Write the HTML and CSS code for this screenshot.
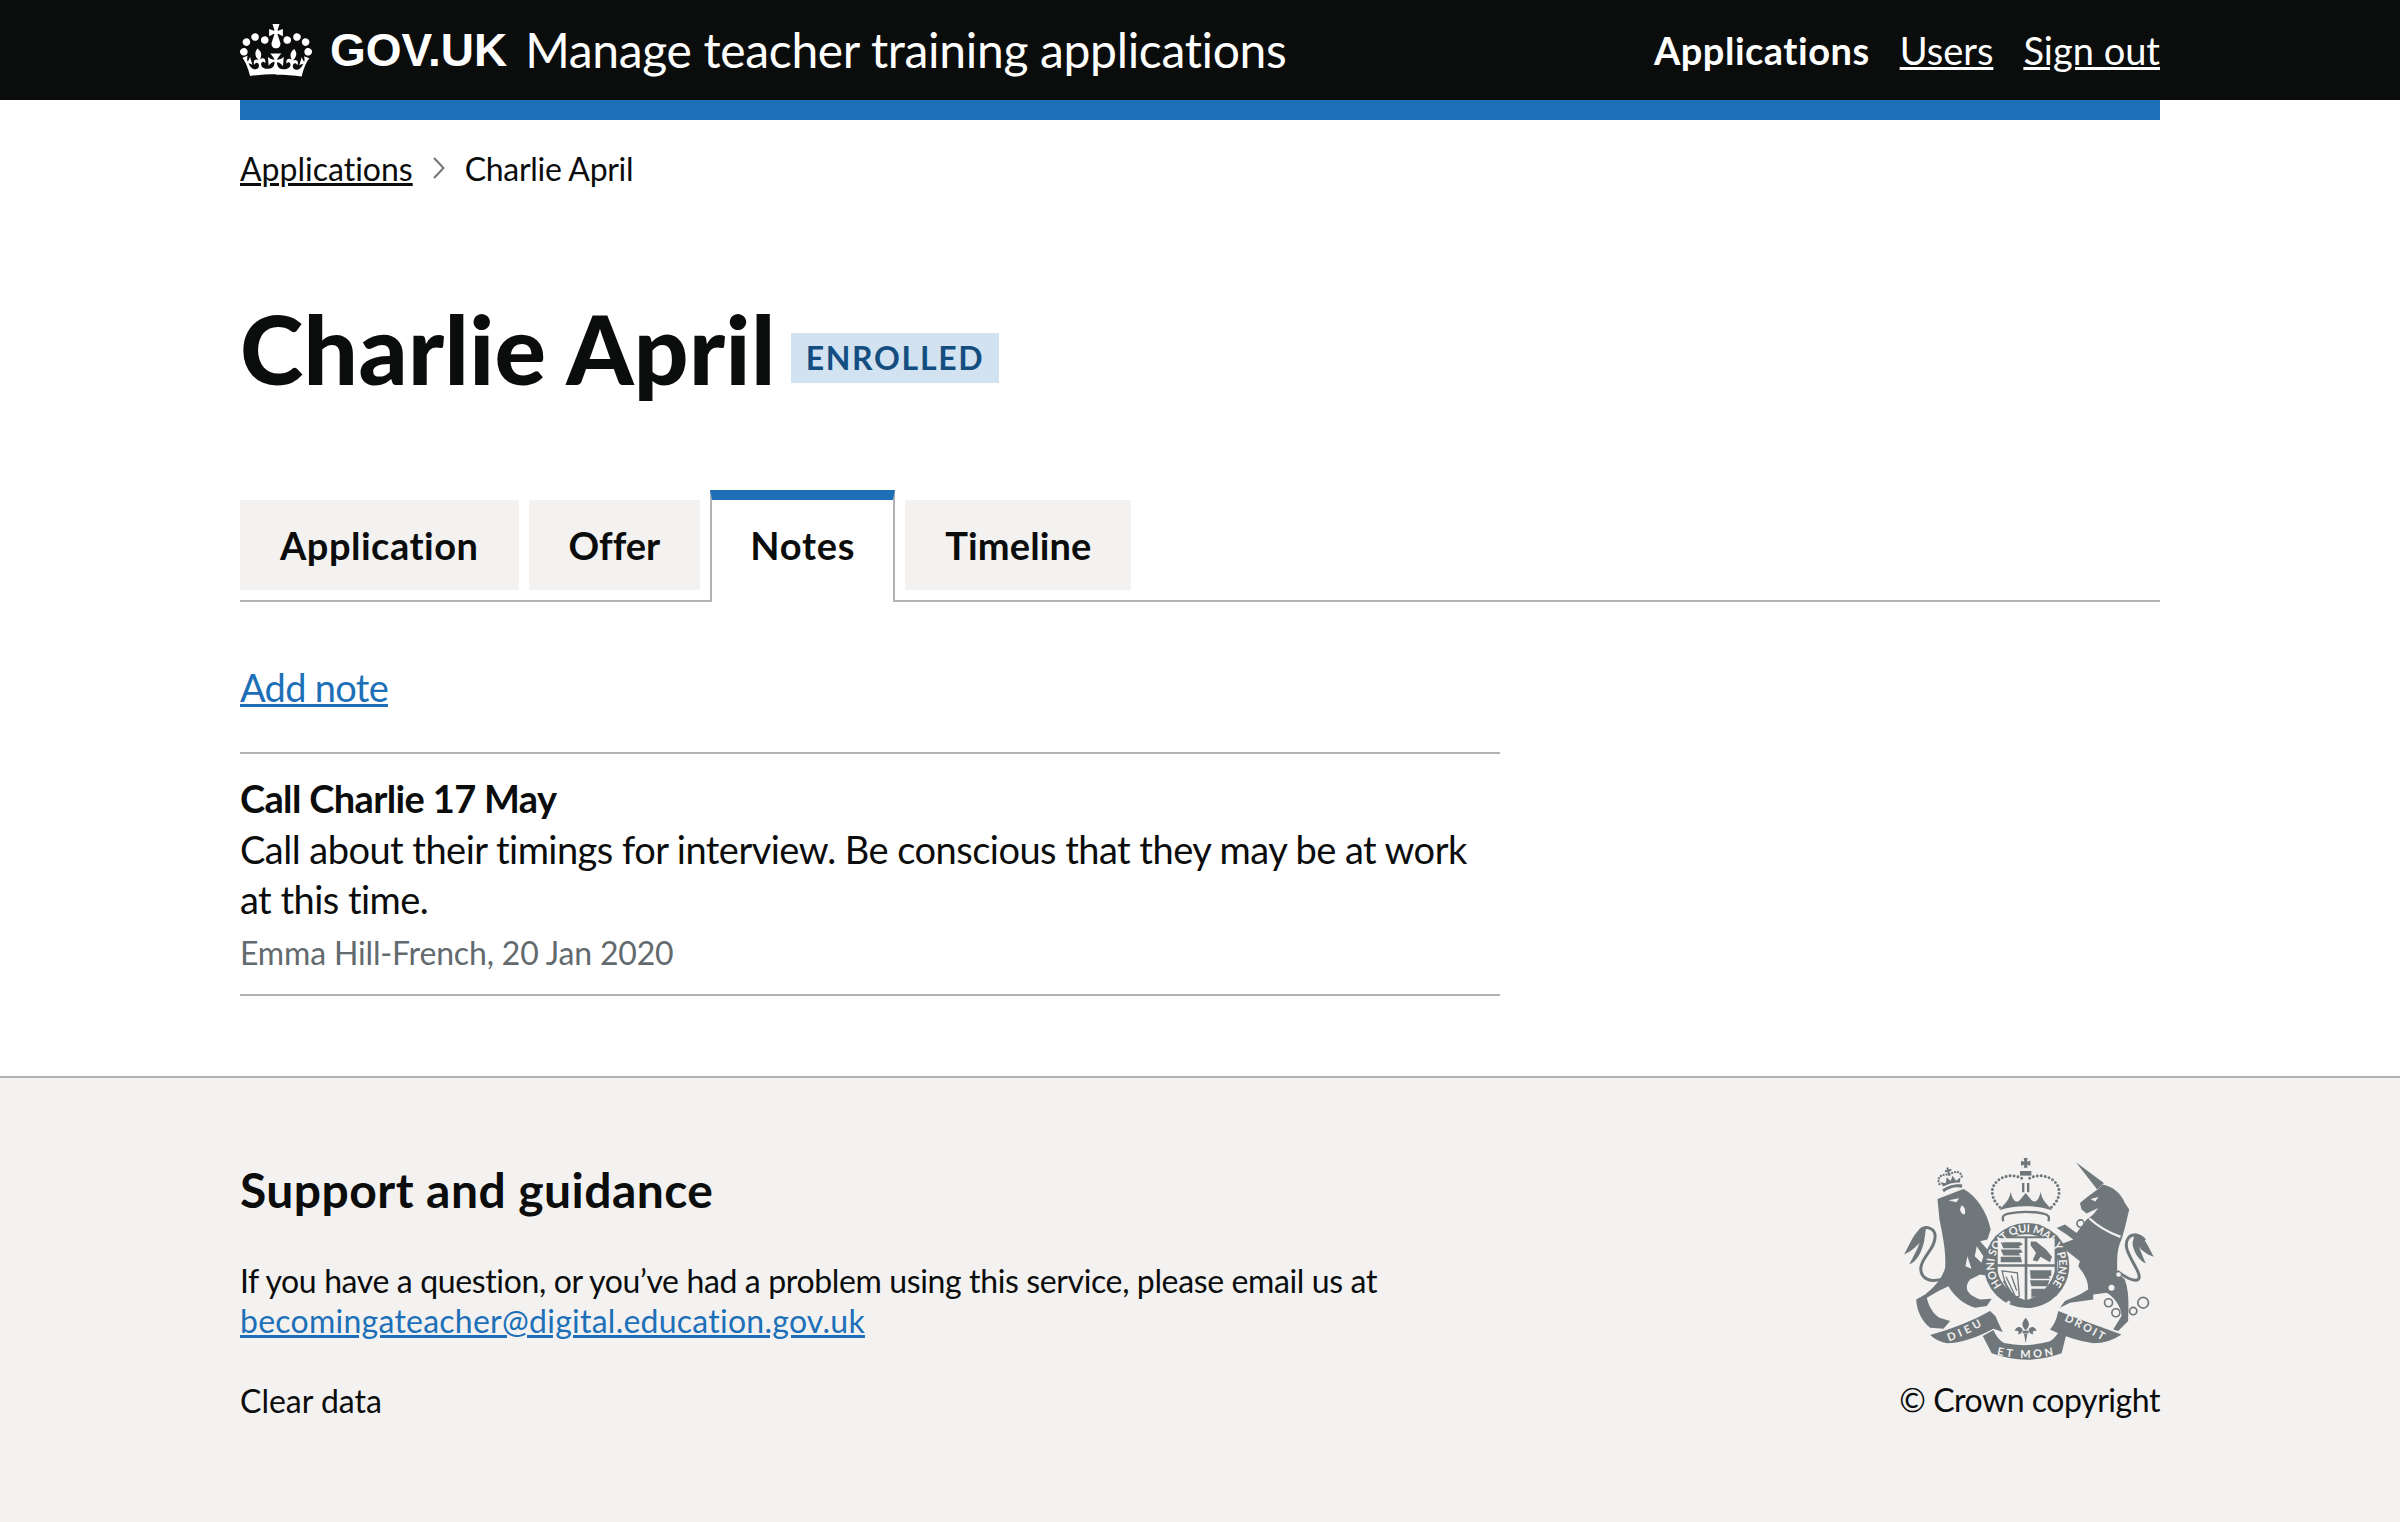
FILE: index.html
```html
<!DOCTYPE html>
<html lang="en">
<head>
<meta charset="utf-8">
<title>Charlie April - Manage teacher training applications</title>
<link rel="stylesheet" href="styles.css">
</head>
<body>
<header class="header">
  <div class="width header-inner">
    <a class="logo" href="#">
      <svg class="crown" viewBox="0 0 132 97" width="72" height="53" aria-hidden="true"><path fill="#fff" fill-rule="evenodd" d="M25 30.2c3.500 1.500 7.700-.2 9.100-3.700 1.500-3.600-.2-7.800-3.900-9.200-3.600-1.400-7.600.3-9.100 3.900-1.400 3.500.3 7.500 3.900 9zM9 39.500c3.600 1.500 7.800-.2 9.200-3.700 1.500-3.600-.2-7.800-3.900-9.100-3.600-1.500-7.600.2-9.100 3.800-1.400 3.500.3 7.500 3.800 9zM4.400 57.200c3.500 1.500 7.700-.2 9.100-3.800 1.500-3.600-.2-7.700-3.900-9.100-3.500-1.500-7.600.3-9.100 3.800-1.400 3.500.3 7.600 3.900 9.100zm38.300-21.400c3.500 1.500 7.700-.2 9.100-3.800 1.500-3.600-.2-7.700-3.900-9.100-3.600-1.500-7.600.3-9.100 3.800-1.300 3.600.4 7.700 3.900 9.100zm64.400-5.600c-3.600 1.500-7.800-.2-9.100-3.700-1.500-3.600.2-7.800 3.800-9.200 3.600-1.400 7.700.3 9.200 3.900 1.300 3.500-.4 7.500-3.900 9zm15.900 9.300c-3.600 1.500-7.700-.2-9.100-3.700-1.500-3.600.2-7.800 3.700-9.100 3.600-1.500 7.700.2 9.200 3.800 1.500 3.500-.3 7.500-3.800 9zm4.700 17.700c-3.600 1.500-7.800-.2-9.200-3.800-1.500-3.600.2-7.700 3.900-9.100 3.600-1.500 7.700.3 9.200 3.800 1.300 3.500-.4 7.600-3.900 9.100zM89.300 35.800c-3.600 1.500-7.800-.2-9.200-3.800-1.400-3.600.2-7.700 3.900-9.100 3.600-1.500 7.700.3 9.200 3.800 1.400 3.600-.3 7.700-3.900 9.100zM69.700 17.700l8.900 4.700V9.300l-8.900 2.800c-.2-.3-.5-.6-.9-.9L72.400 0H59.600l3.500 11.200c-.3.3-.6.5-.9.900l-8.800-2.800v13.100l8.800-4.700c.3.3.6.7.9.9l-5 15.400v.1c-.2.8-.4 1.600-.4 2.400 0 4.100 3.100 7.500 7 8.100h.2c.3 0 .7.1 1 .1.4 0 .7 0 1-.1h.2c4-.6 7.100-4.100 7.100-8.100 0-.8-.1-1.700-.4-2.400V34l-5.100-15.400c.4-.2.7-.6 1-.9zM66 92.800c16.900 0 32.800 1.100 47.100 3.200 4-16.900 8.900-26.700 14-33.500l-9.600-3.400c1 4.900 1.100 7.200 0 10.200-1.500-1.400-3-4.300-4.200-8.700L108.600 76c2.800-2 5-3.200 7.500-3.300-4.400 9.400-10 11.900-13.600 11.200-4.300-.8-6.300-4.600-5.600-7.900 1-4.700 5.700-5.900 8-.5 4.300-8.700-3-11.400-7.600-8.800 7.100-7.200 7.900-13.500 2.100-21.100-8 6.100-8.100 12.300-4.500 20.800-4.700-5.400-12.100-2.500-9.500 6.200 3.400-5.200 7.900-2 7.200 3.100-.6 4.300-6.400 7.800-13.500 7.200-10.300-.9-10.900-8-11.200-13 2.500-.5 7.100 1.800 11 7.300L80.200 60c-4.100 4.400-8 5.300-12.300 5.400 1.400-4.400 8-11.600 8-11.600H55.500s6.400 7.200 7.900 11.600c-4.200-.1-8-1-12.300-5.400l1.400 16.400c3.900-5.500 8.500-7.700 10.900-7.300-.3 5-.7 12.100-11 13-7.200.6-12.900-2.900-13.500-7.200-.7-5 3.800-8.300 7.100-3.100 2.700-8.700-4.600-11.600-9.400-6.200 3.700-8.500 3.600-14.700-4.600-20.800-5.800 7.600-5 13.900 2.200 21.100-4.700-2.600-11.900.1-7.700 8.800 2.300-5.500 7.100-4.200 8.100.5.7 3.300-1.300 7.100-5.700 7.900-3.500.7-9-1.800-13.500-11.200 2.500.1 4.700 1.300 7.500 3.300l-4.700-15.400c-1.200 4.400-2.700 7.200-4.300 8.700-1.100-3-.9-5.300 0-10.200l-9.500 3.400c5 6.900 9.900 16.700 14 33.500 14.800-2.100 30.800-3.200 47.700-3.200z"/></svg>
      <span class="logo-text">GOV.UK</span>
    </a>
    <a class="service" href="#">Manage teacher training applications</a>
    <nav class="nav">
      <a class="nav-active" href="#">Applications</a>
      <a href="#">Users</a>
      <a href="#">Sign out</a>
    </nav>
  </div>
</header>
<div class="width"><div class="bluebar"></div></div>
<div class="width content">
  <nav class="breadcrumbs">
    <a href="#">Applications</a>
    <svg class="chevron" viewBox="0 0 12 22" width="12" height="22" aria-hidden="true"><path d="M1 1l9.500 10L1 21" fill="none" stroke="#6f777b" stroke-width="2"/></svg>
    <span class="crumb-current">Charlie April</span>
  </nav>
  <main>
    <h1 class="title"><span class="title-text">Charlie April</span> <strong class="tag">ENROLLED</strong></h1>
    <ul class="tabs">
      <li class="tab tab-application"><a href="#">Application</a></li>
      <li class="tab tab-offer"><a href="#">Offer</a></li>
      <li class="tab tab-active"><a href="#">Notes</a></li>
      <li class="tab tab-timeline"><a href="#">Timeline</a></li>
    </ul>
    <p class="add"><a href="#">Add note</a></p>
    <section class="note">
      <h2 class="note-title">Call Charlie 17 May</h2>
      <p class="note-body">Call about their timings for interview. Be conscious that they may be at work at this time.</p>
      <p class="note-meta">Emma Hill-French, 20 Jan 2020</p>
    </section>
  </main>
</div>
<footer class="footer">
  <div class="width footer-inner">
    <div class="footer-main">
      <h2 class="footer-title">Support and guidance</h2>
      <p class="footer-text footer-help">If you have a question, or you’ve had a problem using this service, please email us at<br><a href="#">becomingateacher@digital.education.gov.uk</a></p>
      <p class="footer-text">Clear data</p>
    </div>
    <div class="footer-crest">
      <svg class="crest" viewBox="60 40 780 640" width="260" height="213" aria-hidden="true">
        <g class="crest-fill">
          <!-- lion tail -->
          <path class="crest-line thick" d="M195 415C150 435 120 415 122 385C125 350 165 330 165 290C165 265 135 255 118 275"/>
          <path d="M138 262C110 262 95 300 72 345C95 335 108 322 118 310C110 335 100 350 87 375C112 365 125 335 132 305Z"/>
          <!-- lion -->
          <path d="M172 178L250 148C290 170 320 215 332 270L322 300L300 305L335 345L325 385L335 400L330 410L300 405L270 420C250 445 260 465 300 480L335 478L320 500L285 505C255 495 225 475 205 440L175 455L140 475C145 500 160 525 178 535L210 545L190 568L150 565C125 545 110 515 108 480L135 465C160 445 185 420 195 385C198 340 190 300 178 240Z"/>
          <path class="crest-bg" d="M205 182l32-6-8 12zM244 198c8 2 14 12 10 26-8 2-14-8-14-16z"/>
          <path class="crest-bg" d="M290 320l20 30-6 20-20-20zM262 350l-6 30 18 8z"/>
          <!-- lion crown -->
          <g transform="rotate(-14 212 125)">
            <path d="M184 152C198 143 226 143 240 152L243 143C226 135 198 135 181 143Z"/>
            <path d="M186 135L181 120L196 127L203 110L212 124L221 110L228 127L243 120L238 135C222 130 202 130 186 135Z"/>
            <path class="crest-line dots small" d="M177 125C172 100 195 97 212 105C229 97 252 100 247 125"/>
            <path d="M209 82h6v7h7v6h-7v12h-6V95h-7v-6h7z"/>
          </g>
          <!-- big crown -->
          <path d="M431 55h12l-2 11 10-3v15l-10-3 2 9h-12l2-9-10 3V63l10 3z"/>
          <path d="M420 94h34v14h-34z"/>
          <path d="M426 130h7v28h-7zM441 130h7v28h-7z"/>
          <path class="crest-line dots" d="M425 116C395 100 350 110 338 145C332 170 345 190 362 205M449 116C479 100 524 110 536 145C542 170 529 190 512 205"/>
          <path d="M358 212C372 192 386 188 392 157C399 188 412 192 422 178L437 160L452 178C462 192 475 188 482 157C488 188 502 192 516 212C470 196 404 196 358 212Z"/>
          <path class="crest-line mid" d="M370 245C365 232 370 225 385 222C420 215 455 215 490 222C505 225 510 232 505 245"/>
          <!-- unicorn tail -->
          <path class="crest-line thick" d="M712 395C760 432 792 432 772 392C752 352 728 322 745 296C755 280 780 285 795 302"/>
          <path d="M765 282C790 282 805 320 822 352C800 345 785 332 777 322C785 340 790 355 798 372C775 362 760 335 758 310Z"/>
          <path d="M588 68L672 130L652 150Z"/>
          <!-- unicorn -->
          <path d="M600 190L625 170L655 148L668 135C700 140 725 165 735 190L748 210L735 265L725 300C710 330 712 360 712 400L735 420C750 460 745 510 745 545L715 575L700 570L725 530C725 500 700 470 680 460L640 465L640 480L570 490L540 505L555 485L600 465L625 450C625 420 610 400 595 380L600 365L555 330L540 315L580 300L560 285L530 265L555 255L590 280L620 240L640 225L655 205L620 222L605 210Z"/>
          <path class="crest-line collar" d="M628 236C655 262 690 280 722 292"/>
          <path class="crest-bg" d="M632 178l24-6-10 14z"/>
          <circle class="crest-bg" cx="725" cy="360" r="9"/><circle class="crest-bg" cx="716" cy="405" r="7"/><circle class="crest-bg" cx="695" cy="445" r="9"/>
          <circle class="crest-ring" cx="602" cy="252" r="11"/><circle class="crest-ring" cx="595" cy="338" r="10"/>
          <circle class="crest-ring" cx="686" cy="490" r="12"/><circle class="crest-ring" cx="708" cy="520" r="12"/><circle class="crest-ring" cx="760" cy="515" r="11"/><circle class="crest-ring" cx="790" cy="490" r="16"/>
          <!-- garter -->
          <circle cx="440" cy="378" r="128"/>
          <circle class="crest-bg" cx="440" cy="378" r="94"/>
          <path d="M345 290H532V390C532 440 490 475 438 495C386 475 345 440 345 390Z"/>
          <path class="crest-bg" d="M353 296H434V374H353ZM442 296H524V374H442ZM353 382H434V482C395 465 360 435 353 395ZM442 382H524V395C516 435 482 465 442 482Z"/>
          <path d="M362 308h60l6 8-12 4 6 6h-52zM362 330h60l6 8-12 4 6 6h-52zM362 352h60l4 16h-64z"/>
          <path d="M452 306h16l30 24 18 22-6 16-28-16-10 14-14-4 10-22-16-22z"/>
          <path d="M450 392h64v16l-8 4 6 6h-60zM450 422h58l-6 18h-48zM454 448h40l-14 18-26 8z"/>
          <path d="M366 394l46 6 6 70-10 4c-20-18-36-44-42-80z" class="crest-line harp"/>
          <path d="M378 412l26 54M394 408l16 46M370 424l22 38" class="crest-line harp"/>
          <circle class="crest-bg" cx="408" cy="510" r="5"/><circle class="crest-bg" cx="448" cy="518" r="7"/><circle class="crest-bg" cx="490" cy="510" r="5"/>
          <path class="crest-bg" d="M384 483l8 5-10 16-8-4z"/>
          <!-- ribbon -->
          <path d="M150 587Q250 560 330 515L346 530Q358 558 368 578L340 568Q262 610 200 612Q170 606 150 587Z"/>
          <path d="M510 570Q528 552 535 515Q610 545 725 585Q690 610 640 612Q570 600 510 570Z"/>
          <path d="M308 590L340 572Q352 600 372 611Q440 626 510 606Q530 592 540 570L558 590L545 642Q440 680 335 642Z"/>
          <path class="crest-fleur" d="M437 535c-12 14-14 24 0 38 14-14 12-24 0-38zM404 575c4-16 20-16 24-4 0 8-8 14-14 14 4-8 0-14-10-10zM470 575c-4-16-20-16-24-4 0 8 8 14 14 14-4-8 0-14 10-10zM428 574h18v8h-18zM432 584h10l-5 28z"/>
        </g>
        <path id="garter-arc" class="crest-none" d="M365.700 437.300A97 97 0 1 1 514.300 437.300"/>
        <path id="dieu-arc" class="crest-none" d="M207 606Q262 586 318 552"/>
        <path id="droit-arc" class="crest-none" d="M552 543Q612 572 672 606"/>
        <path id="mon-arc" class="crest-none" d="M350 646Q438 666 526 646"/>
        <text class="crest-text"><textPath href="#garter-arc" textLength="436" lengthAdjust="spacing">HONI SOIT QUI MAL Y PENSE</textPath></text>
        <text class="crest-text"><textPath href="#dieu-arc" textLength="110" lengthAdjust="spacing">DIEU</textPath></text>
        <text class="crest-text"><textPath href="#droit-arc" textLength="130" lengthAdjust="spacing">DROIT</textPath></text>
        <text class="crest-text"><textPath href="#mon-arc" textLength="172" lengthAdjust="spacing">ET MON</textPath></text>
      </svg>
      <p class="footer-text copyright">© Crown copyright</p>
    </div>
  </div>
</footer>
</body>
</html>
```
FILE: styles.css
```css
* { box-sizing: border-box; }
html, body { margin: 0; padding: 0; }
body {
  font-family: Lato, "Noto Sans", "Liberation Sans", sans-serif;
  font-variant-ligatures: none;
  color: #0b0c0c;
  background: #fff;
  font-size: 38px;
  min-height: 100vh;
  display: flex;
  flex-direction: column;
}
.width { width: 1920px; margin: 0 auto; }
a { color: inherit; }
.header { background: #0b0c0c; height: 100px; color: #fff; }
.header-inner { display: flex; align-items: center; height: 100px; }
.logo { display: flex; align-items: center; gap: 18px; text-decoration: none; margin-right: 18px; }
.logo-text { font-family: "Liberation Sans", sans-serif; font-weight: 700; font-size: 46px; }
.crown { display: block; }
.service { font-size: 48px; letter-spacing: -0.33px; text-decoration: none; padding-bottom: 2px; }
.nav { margin-left: auto; display: flex; gap: 30px; font-size: 38px; }
.nav-active { font-weight: 700; letter-spacing: 0.5px; text-decoration: none; }
.bluebar { height: 20px; background: #1d70b8; }
.breadcrumbs { display: flex; align-items: center; height: 60px; margin-top: 18px; font-size: 32px; }
.crumb-current { letter-spacing: -0.3px; }
.chevron { margin: 0 20px 0 20px; }
.title { margin: 100px 0 0; font-size: 96px; line-height: 100px; font-weight: 900; display: flex; align-items: center; gap: 15px; }
.title-text { letter-spacing: 0.35px; }
.tag { font-size: 32px; font-weight: 700; letter-spacing: 1.7px; color: #144e81; background: #d2e2f1; padding: 5px 15px; line-height: 40px; margin-top: 19px; }
.tabs { list-style: none; margin: 92px 0 0; padding: 0; display: flex; gap: 10px; border-bottom: 2px solid #b1b4b6; height: 112px; }
.tab { height: 90px; margin-top: 10px; background: #f3f2f1; padding: 0 40px; font-size: 38px; font-weight: 700; line-height: 90px; }
.tab a { text-decoration: none; }
.tab-application { letter-spacing: 0.5px; }
.tab-offer { letter-spacing: 0; }
.tab-timeline { letter-spacing: 0.1px; }
.tab-active { height: 112px; margin-top: 0; background: #fff; border: 2px solid #b1b4b6; border-top: 10px solid #1d70b8; border-bottom: 0; padding: 0 38px; letter-spacing: 0.8px; }
.add { margin: 60px 0 0; font-size: 38px; line-height: 50px; letter-spacing: -0.7px; color: #1d70b8; }
.note { width: 1260px; margin-top: 40px; border-top: 2px solid #b1b4b6; border-bottom: 2px solid #b1b4b6; padding: 20px 0 21px; }
.note-title { margin: 0 0 2px; font-size: 38px; line-height: 48px; font-weight: 700; letter-spacing: -0.65px; }
.note-body { margin: 0; font-size: 38px; line-height: 50px; letter-spacing: -0.53px; }
.note-meta { margin: 9px 0 0; font-size: 32px; line-height: 40px; letter-spacing: -0.16px; color: #626a6e; }
.footer { flex: 1; border-top: 2px solid #b1b4b6; margin-top: 80px; background: #f3f2f1; }
.footer-inner { display: flex; justify-content: space-between; padding-top: 75px; }
.footer-main { padding-top: 12px; }
.footer-title { margin: 0 0 46px; font-size: 48px; line-height: 50px; font-weight: 700; letter-spacing: 0.45px; }
.footer-text { margin: 0 0 40px; font-size: 32px; line-height: 40px; }
.footer-help { letter-spacing: -0.37px; }
.footer-text a { color: #1d70b8; letter-spacing: 0.25px; }
.footer-crest { display: flex; flex-direction: column; align-items: flex-end; }
.crest { display: block; }
.copyright { margin-top: 14px; letter-spacing: -0.45px; }
.crest-fill { fill: #6f777b; }
.crest-bg { fill: #f3f2f1; }
.crest-none { fill: none; }
.crest-line { fill: none; stroke: #6f777b; }
.thick { stroke-width: 9; }
.mid { stroke-width: 7; }
.dots { stroke-width: 9; stroke-linecap: round; stroke-dasharray: 0 12; }
.small { stroke-width: 7; stroke-dasharray: 0 9; }
.collar { stroke: #f3f2f1; stroke-width: 7; }
.harp { stroke-width: 4; }
.crest-ring { fill: none; stroke: #6f777b; stroke-width: 5; }
.crest-fleur { fill: #6f777b; }
.crest-text { fill: #f3f2f1; font-family: Lato, sans-serif; font-weight: 700; font-size: 33px; }
```
